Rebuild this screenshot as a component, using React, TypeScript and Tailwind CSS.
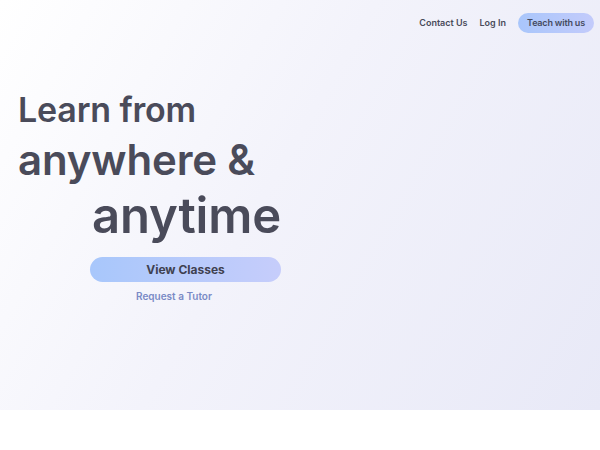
import React from "react";

export default function App() {
  return (
    <div className="w-[600px] h-[450px] bg-white font-['Inter',sans-serif]">
      <section className="relative h-[410px] bg-[linear-gradient(120deg,#ffffff_0%,#f3f3fb_45%,#e8e9f7_100%)]">
        <nav className="flex items-center justify-end gap-3 pt-[13px] pr-[6px]">
          <a className="text-[9px] font-semibold text-[#4a4b5a]">Contact Us</a>
          <a className="text-[9px] font-semibold text-[#4a4b5a]">Log In</a>
          <button className="h-[20px] w-[76px] rounded-full bg-[linear-gradient(90deg,#a9c6fb,#c3cbfb)] text-[9px] font-semibold tracking-[-0.02em] text-[#444a60]">
            Teach with us
          </button>
        </nav>
        <div className="mt-[52px] ml-[18px] flex w-[263px] flex-col text-[#4a4b5a]">
          <h1 className="flex flex-col font-semibold tracking-[-0.01em]">
            <span className="text-[34px] leading-[50px]">Learn from</span>
            <span className="text-[42px] leading-[50px]">anywhere &amp;</span>
            <span className="self-end text-[49px] leading-[62px]">anytime</span>
          </h1>
          <button className="mt-[10px] self-end h-[25px] w-[191px] rounded-full bg-[linear-gradient(90deg,#a8c7fb,#c6cdfb)] text-[12px] font-bold text-[#3f4150]">
            View Classes
          </button>
          <a className="mt-[7px] ml-[118px] text-[10px] font-semibold text-[#7a8bc6]">
            Request a Tutor
          </a>
        </div>
      </section>
    </div>
  );
}
